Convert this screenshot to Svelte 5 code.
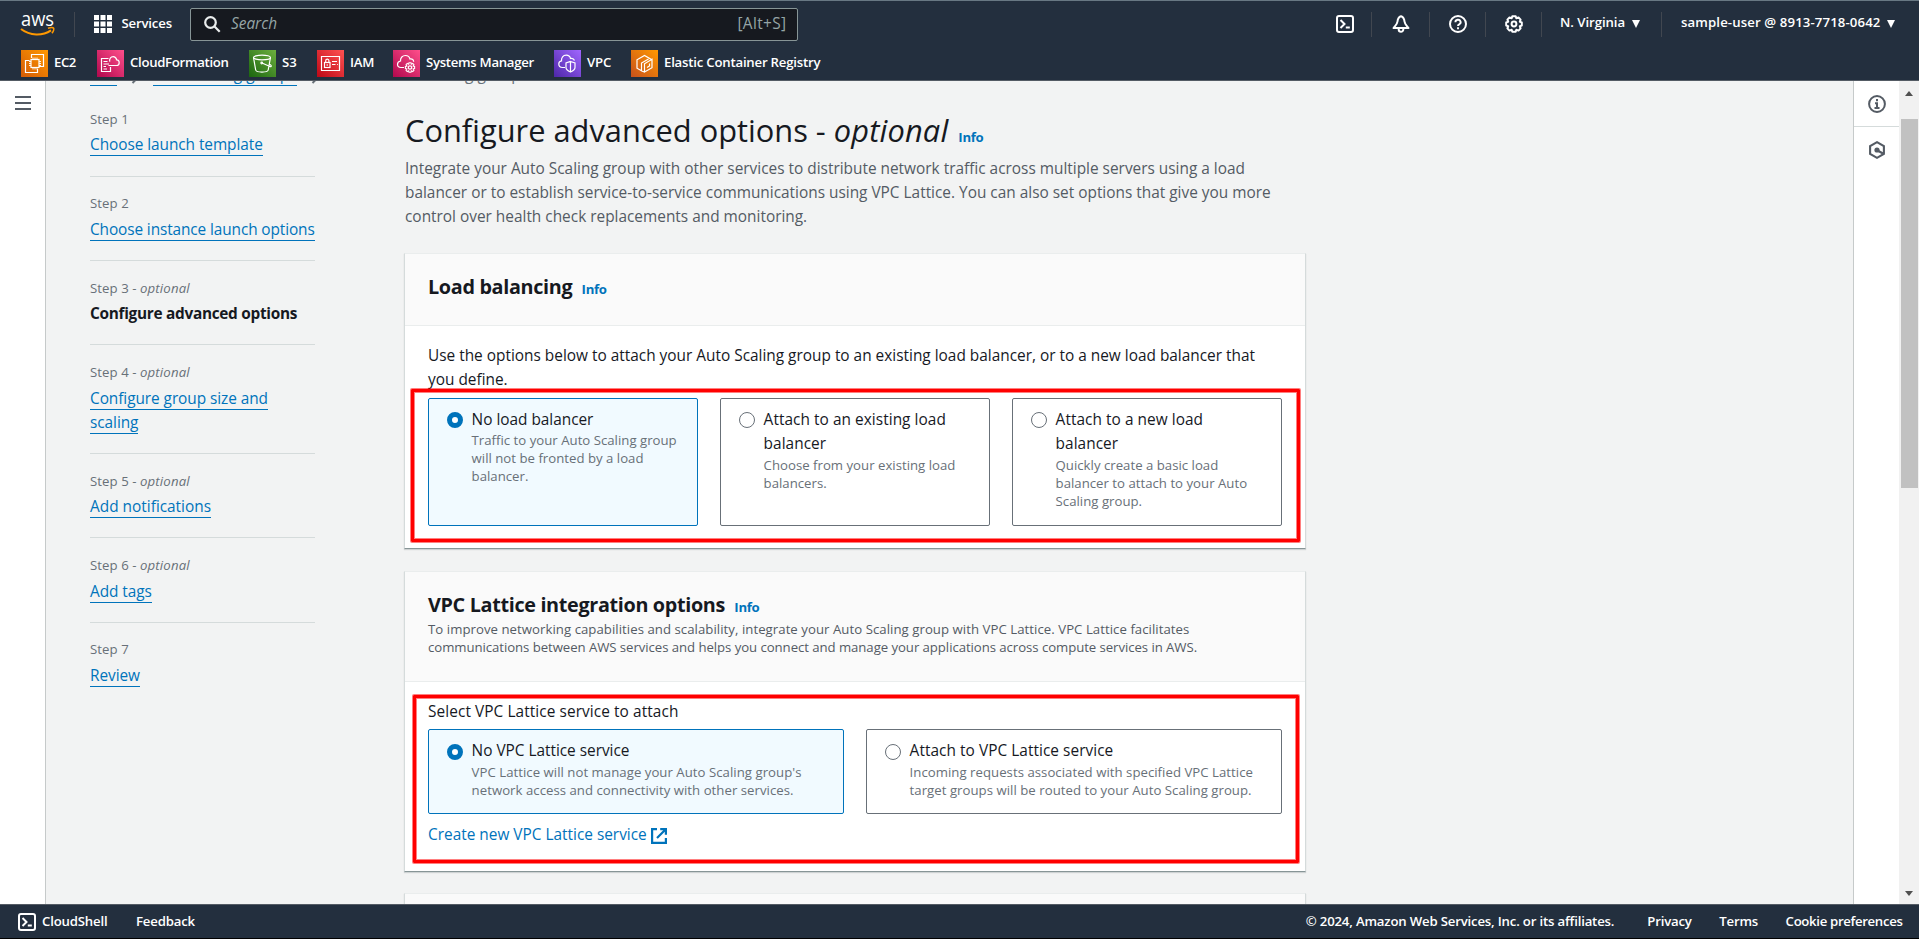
<script>
  const favorites = [
    { name: 'EC2', icon: 'ec2', from: '#d45b07', to: '#ff9900', width: 76, track: -0.45 },
    { name: 'CloudFormation', icon: 'cfn', from: '#b0084d', to: '#ff4f8b', width: 152, track: -0.31 },
    { name: 'S3', icon: 's3', from: '#1b660f', to: '#6cae3e', width: 68, track: 0 },
    { name: 'IAM', icon: 'iam', from: '#bd0816', to: '#ff5252', width: 76, track: -0.25 },
    { name: 'Systems Manager', icon: 'ssm', from: '#b0084d', to: '#ff4f8b', width: 161, track: -0.3 },
    { name: 'VPC', icon: 'vpc', from: '#4d27a8', to: '#a166ff', width: 77, track: -0.1 },
    { name: 'Elastic Container Registry', icon: 'ecr', from: '#c8511b', to: '#ff9900', width: 190, track: -0.21 }
  ];

  const steps = [
    { label: 'Step 1', title: 'Choose launch template' },
    { label: 'Step 2', title: 'Choose instance launch options' },
    { label: 'Step 3', optional: true, title: 'Configure advanced options', current: true },
    { label: 'Step 4', optional: true, title: 'Configure group size and scaling' },
    { label: 'Step 5', optional: true, title: 'Add notifications' },
    { label: 'Step 6', optional: true, title: 'Add tags' },
    { label: 'Step 7', title: 'Review' }
  ];

  const balancers = [
    { title: ['No load balancer'], text: ['Traffic to your Auto Scaling group', 'will not be fronted by a load', 'balancer.'] },
    { title: ['Attach to an existing load', 'balancer'], text: ['Choose from your existing load', 'balancers.'] },
    { title: ['Attach to a new load', 'balancer'], text: ['Quickly create a basic load', 'balancer to attach to your Auto', 'Scaling group.'] }
  ];

  const lattice = [
    { title: ['No VPC Lattice service'], text: ['VPC Lattice will not manage your Auto Scaling group\'s', 'network access and connectivity with other services.'] },
    { title: ['Attach to VPC Lattice service'], text: ['Incoming requests associated with specified VPC Lattice', 'target groups will be routed to your Auto Scaling group.'] }
  ];

  let balancer = $state(0);
  let service = $state(0);
</script>

{#snippet shell()}
  <svg class="ico18" viewBox="0 0 18 18" fill="none" stroke="#fff" stroke-width="2">
    <rect x="1" y="1" width="16" height="16" rx="2" />
    <path d="M4.500 5l4 4-4 4M9.800 12.600h4" />
  </svg>
{/snippet}

{#snippet tiles(options, selected, pick)}
  <div class="tiles" role="radiogroup">
    {#each options as option, i}
      <button class="tile" class:selected={selected === i} role="radio" aria-checked={selected === i} onclick={() => pick(i)}>
        <span class="radio"></span>
        <span class="tile-body">
          <span class="tile-title">{#each option.title as line}<span class="line">{line}</span>{/each}</span>
          <span class="tile-text">{#each option.text as line}<span class="line">{line}</span>{/each}</span>
        </span>
      </button>
    {/each}
  </div>
{/snippet}

<div class="app">
  <header>
    <div class="bar">
      <svg class="logo" width="37" height="25" viewBox="0 0 37 25">
        <text x="1" y="13.500" textLength="33" lengthAdjust="spacingAndGlyphs" class="logo-text">aws</text>
        <path d="M1 17c9 7 21.500 7 30 1.300" fill="none" stroke="#f90" stroke-width="2" />
        <path d="M28 16.300c2.500-.9 5-.8 5.600-.2s0 3.200-1.700 5.200" fill="none" stroke="#f90" stroke-width="1.500" />
      </svg>
      <i class="sep first"></i>
      <svg class="ico18 grid" viewBox="0 0 18 18" fill="#fff">
        {#each [0, 6.5, 13] as y}{#each [0, 6.5, 13] as x}<rect {x} {y} width="5" height="5" />{/each}{/each}
      </svg>
      <span class="services">Services</span>
      <div class="search">
        <svg width="17" height="17" viewBox="0 0 17 17" fill="none" stroke="#eaeded" stroke-width="2.200">
          <circle cx="6.500" cy="6.500" r="5.300" /><path d="M10.300 10.300l5.400 5.400" />
        </svg>
        <em>Search</em>
        <span class="hint">[Alt+S]</span>
      </div>
      <div class="tools">
        <div class="tool t1">{@render shell()}</div>
        <div class="tool t2">
          <svg class="ico18" viewBox="0 0 18 18" fill="none" stroke="#fff" stroke-width="2" stroke-linejoin="round">
            <path d="M9 1.200C6.600 2 5.700 4 5.500 6.500 5.300 9 3.500 10.500 1.500 13h15c-2-2.500-3.800-4-4-6.500C12.300 4 11.400 2 9 1.200z" />
            <path d="M6.700 13.500v1a2.300 2.300 0 0 0 4.600 0v-1" />
          </svg>
        </div>
        <div class="tool t3">
          <svg class="ico18" viewBox="0 0 18 18" fill="none" stroke="#fff" stroke-width="2">
            <circle cx="9" cy="9" r="8" />
            <path d="M6.400 7.200a2.600 2.400 0 1 1 3.800 2.100c-.9.500-1.200.8-1.200 1.700M9 12.200v2" stroke-width="1.900" />
          </svg>
        </div>
        <div class="tool t4">
          <svg class="ico18" viewBox="0 0 18 18" fill="none" stroke="#fff" stroke-width="2" stroke-linejoin="round">
            <path d="M7.300 1.300h3.400l.6 1.900 2.200-.8 2.100 2.200-.8 2.100 2 .7v3.200l-2 .7.800 2.100-2.100 2.200-2.200-.8-.6 1.900H7.300l-.6-1.900-2.200.8-2.100-2.200.8-2.100-2-.7V7.400l2-.7-.8-2.100 2.100-2.200 2.200.8z" />
            <circle cx="9" cy="9" r="2.400" />
          </svg>
        </div>
        <div class="tool region"><span>N. Virginia</span><i class="caret"></i></div>
        <div class="tool user"><span>sample-user @ 8913-7718-0642</span><i class="caret"></i></div>
      </div>
    </div>
    <nav class="favorites">
      {#each favorites as fav}
        <a href="#{fav.icon}" style="width: {fav.width}px; letter-spacing: {fav.track}px">
          <svg width="27" height="27" viewBox="0 0 27 27" fill="none" stroke="#fff" stroke-width="1.200">
            <defs><linearGradient id={fav.icon} x1="0" y1="1" x2="1" y2="0"><stop offset="0" stop-color={fav.from} /><stop offset="1" stop-color={fav.to} /></linearGradient></defs>
            <rect width="27" height="27" fill="url(#{fav.icon})" stroke="none" />
            {#if fav.icon === 'ec2'}
              <path d="M10.500 8V4.500h12v12H18M8.500 10.500h-4v12h12V19" />
              <rect x="10" y="9.500" width="8" height="8" />
              <path d="M12 7.500v2M14 7.500v2M16 7.500v2M12 17.500v2M14 17.500v2M16 17.500v2M8 11.500h2M8 13.500h2M8 15.500h2M18 11.500h2M18 13.500h2M18 15.500h2" stroke-width=".9" />
            {:else if fav.icon === 'cfn'}
              <path d="M13.500 17v4.500h-9V8.500h7M6.500 11.500h4M6.500 14h5.500M6.500 16.500h2.500M6.500 19h3.500" />
              <path d="M11.500 15.500h8c1.700 0 2.700-1.200 2.700-2.800s-1-2.700-2.500-2.800c-.5-2-1.500-3.300-3.500-3.300-2.500 0-4.200 2.400-3.400 5" />
            {:else if fav.icon === 's3'}
              <ellipse cx="13" cy="7.500" rx="8.500" ry="2.300" />
              <path d="M4.500 7.500L6.700 20c.5 2.700 12 2.700 12.500 0L21.500 7.500M13 13l8 3.500c1.700.6 1.700-1 0-2l-1-.5" /><circle cx="12.700" cy="13" r=".8" />
            {:else if fav.icon === 'iam'}
              <path d="M4.500 6.500h18v14h-18zM15 11.500h5M15 14.500h3.500M20 14.500h.8" />
              <rect x="7.500" y="12.500" width="5.500" height="5" /><path d="M8.700 12.500v-1.700a1.600 1.600 0 0 1 3.200 0v1.700M10.200 14.300v1.500" />
            {:else if fav.icon === 'ssm'}
              <path d="M11 17.500H8c-2 0-3.500-1.200-3.500-3.200s1.200-3 3-3.300C7.300 7.700 9.500 5.500 12.500 5.500c2.500 0 4 1.500 4.500 3.500 2.500-.5 3.500 1 3.700 2.700" />
              <circle cx="17" cy="17.500" r="1.700" />
              <path d="M16 12.700h2l.3 1.500 1.400-.8 1.200 1.300-.8 1.400 1.500.4v2l-1.500.4.800 1.400-1.200 1.300-1.400-.8-.3 1.500h-2l-.3-1.500-1.400.8-1.200-1.300.8-1.400-1.500-.4v-2l1.500-.4-.8-1.400 1.200-1.300 1.400.8z" stroke-width="1.100" />
            {:else if fav.icon === 'vpc'}
              <path d="M11 17.500H8.500c-2.200 0-3.700-1.300-3.700-3.400 0-1.900 1.200-3 2.700-3.200C7.300 7.700 9 5.200 12.200 5.200c2.300 0 3.800 1.300 4.300 3.300 2.200-.5 3.500.7 4 2" />
              <path d="M16.500 11.500l4.500 1.500v4.500c0 2-2 3.400-4.500 4.500-2.500-1.100-4.500-2.500-4.500-4.500V13zM16.500 11.500V22" />
            {:else}
              <path d="M20.500 9.500l-7-4-7.500 4.300v8.400l4.500 2.600V13l7-4M13.500 22l7.500-4.300V9.300l-7.500 4.500zM10.500 21l3 1M16 17.500l2.500-1.500v-2.500" />
            {/if}
          </svg>
          <span>{fav.name}</span>
        </a>
      {/each}
    </nav>
  </header>

  <div class="middle">
    <aside class="rail"><i></i><i></i><i></i></aside>

    <div class="page">
      <div class="crumbs">
        <a href="#ec2-home">EC2</a>
        <svg width="8" height="12" viewBox="0 0 8 12"><path d="M1.500 1l5 5-5 5" fill="none" stroke="#687078" stroke-width="2" /></svg>
        <a href="#groups">Auto Scaling groups</a>
        <svg width="8" height="12" viewBox="0 0 8 12"><path d="M1.500 1l5 5-5 5" fill="none" stroke="#687078" stroke-width="2" /></svg>
        <span>Create Auto Scaling group</span>
      </div>

      <div class="columns">
        <ol class="steps">
          {#each steps as step}
            <li>
              <div class="step-label">{step.label}{#if step.optional}{' - '}<em>optional</em>{/if}</div>
              <div class="step-title">
                {#if step.current}<b>{step.title}</b>{:else}<a href="#step">{step.title}</a>{/if}
              </div>
            </li>
          {/each}
        </ol>

        <main>
          <h1>Configure advanced options - <em>optional</em> <a class="info" href="#info">Info</a></h1>
          <p class="intro">
            <span class="line">Integrate your Auto Scaling group with other services to distribute network traffic across multiple servers using a load</span>
            <span class="line">balancer or to establish service-to-service communications using VPC Lattice. You can also set options that give you more</span>
            <span class="line">control over health check replacements and monitoring.</span>
          </p>

          <section class="card load">
            <div class="card-head"><h2>Load balancing <a class="info" href="#info">Info</a></h2></div>
            <div class="card-body">
              <p>
                <span class="line">Use the options below to attach your Auto Scaling group to an existing load balancer, or to a new load balancer that</span>
                <span class="line">you define.</span>
              </p>
              {@render tiles(balancers, balancer, (i) => (balancer = i))}
            </div>
            <div class="mark"></div>
          </section>

          <section class="card vpc">
            <div class="card-head">
              <h2>VPC Lattice integration options <a class="info" href="#info">Info</a></h2>
              <p>
                <span class="line wide">To improve networking capabilities and scalability, integrate your Auto Scaling group with VPC Lattice. VPC Lattice facilitates</span>
                <span class="line">communications between AWS services and helps you connect and manage your applications across compute services in AWS.</span>
              </p>
            </div>
            <div class="card-body">
              <p>Select VPC Lattice service to attach</p>
              {@render tiles(lattice, service, (i) => (service = i))}
              <a class="create" href="#create">Create new VPC Lattice service
                <svg width="16" height="16" viewBox="0 0 16 16" fill="none" stroke="#0073bb" stroke-width="2.200"><path d="M6 1.100H1.100v13.800h13.800V10M9.200 1.100h5.700v5.700M14.500 1.500L6 10" /></svg>
              </a>
            </div>
            <div class="mark"></div>
          </section>

          <section class="card next"></section>
        </main>
      </div>
    </div>

    <aside class="panel">
      <div class="panel-item">
        <svg class="ico18" viewBox="0 0 18 18" fill="none" stroke="#545b64" stroke-width="2"><circle cx="9" cy="9" r="7.900" /><path d="M9 4v2.200M7 8.200h2v4.300M6.500 13h5" /></svg>
      </div>
      <div class="panel-item">
        <svg class="ico18" viewBox="0 0 18 18" fill="none" stroke="#545b64" stroke-width="2.100"><path d="M9 1.200l6.900 4v7.600L9 16.800l-6.900-4V5.200z" /><circle cx="9" cy="9" r="2.600" fill="#545b64" stroke="none" /><path d="M9.500 9.500l5.500 3" /></svg>
      </div>
    </aside>
    <div class="scroll"><i class="up"></i><i class="thumb"></i><i class="down"></i></div>
  </div>

  <footer>
    {@render shell()}
    <span class="f-shell">CloudShell</span>
    <span>Feedback</span>
    <span class="f-copy">© 2024, Amazon Web Services, Inc. or its affiliates.</span>
    <span class="f-privacy">Privacy</span>
    <span class="f-terms">Terms</span>
    <span class="f-cookie">Cookie preferences</span>
  </footer>
</div>

<style>
  :global(body) { margin: 0; overflow: hidden; }
  .app {
    width: 1919px; height: 939px; display: flex; flex-direction: column; overflow: hidden;
    font-family: 'Open Sans', 'Noto Sans', sans-serif; font-size: 15.4px; line-height: 24.4px; color: #16191f;
    background: #f2f3f3;
  }
  * { box-sizing: border-box; }
  p, h1, h2, ol { margin: 0; padding: 0; font-weight: 400; }
  a { color: #0073bb; text-decoration: none; }
  .line { display: block; white-space: nowrap; }
  svg { flex: none; display: block; }
  .ico18 { width: 18px; height: 18px; flex: none; }

  header {
    flex: none; height: 81px; background: #232f3e; color: #fff; border-top: 1px solid #687883; border-bottom: 1px solid #545b64;
    font-size: 13.2px; font-weight: 600; display: flex; flex-direction: column;
  }
  .bar { height: 46px; display: flex; align-items: center; padding-left: 20px; }
  .logo { overflow: visible; }
  .logo-text { font: 500 19.500px 'Open Sans', sans-serif; fill: #fff; }
  .sep { width: 1px; height: 25px; background: #414750; margin-left: 17px; }
  .grid { margin-left: 19px; }
  .services { margin-left: 9.500px; width: 68.500px; padding-bottom: 2px; letter-spacing: -.18px; }
  .search {
    width: 608px; height: 33px; background: #16191f; border: 1px solid #879596; border-radius: 2px; color: #95a5a6;
    display: flex; align-items: center; padding: 0 10.500px 0 13px; font-size: 15.4px; font-weight: 400;
  }
  .search em { margin-left: 10px; }
  .hint { margin-left: auto; letter-spacing: .38px; padding-top: 1px; }
  .tools { display: flex; align-items: center; margin-left: auto; }
  .tool { display: flex; align-items: center; justify-content: center; height: 25px; border-left: 1px solid #414750; }
  .tool span { padding-bottom: 3px; }
  .t1 { width: 52px; border-left: 0; }
  .t2 { width: 58px; }
  .t3 { width: 56px; }
  .t4 { width: 56px; }
  .region { width: 120px; justify-content: flex-start; padding-left: 18px; letter-spacing: -.05px; }
  .user { width: 258px; justify-content: flex-start; padding-left: 19px; letter-spacing: .12px; }
  .caret { border: 4.500px solid transparent; border-top: 8px solid #fff; border-bottom: 0; margin-left: 7px; }
  .favorites { display: flex; padding-left: 21px; height: 33px; align-items: center; }
  .favorites a { display: flex; align-items: center; gap: 6px; color: #fff; white-space: nowrap; flex: none; }
  .favorites span { padding-bottom: 2px; }

  .middle { flex: 1; min-height: 0; display: flex; }
  .rail { flex: none; width: 46px; background: #fff; border-right: 1px solid #c6caca; display: flex; flex-direction: column; gap: 4px; padding: 15px 0 0 15px; }
  .rail i { width: 16px; height: 2px; background: #545b64; }
  .page { flex: 1; overflow: hidden; padding: 0 0 0 44px; }

  .crumbs { display: flex; align-items: center; height: 24px; margin-top: -18px; color: #687078; white-space: nowrap; letter-spacing: .08px; }
  .crumbs a { border-bottom: 1px solid #0073bb; line-height: 20px; }
  .crumbs svg { margin: 6px 14px 0; }

  .columns { display: flex; }
  .steps { list-style: none; width: 225px; flex: none; margin: 5.300px 90px 0 0; }
  .steps li { padding: 18.500px 0 18.100px; border-bottom: 1px solid #d5dbdb; }
  .steps li:last-child { border: 0; }
  .step-label { font-size: 13.2px; line-height: 17.600px; color: #687078; letter-spacing: .06px; }
  .step-label em { letter-spacing: .15px; }
  .step-title { padding-top: 5px; line-height: 24.200px; letter-spacing: -.06px; margin-right: -4px; }
  .steps li:nth-child(2) .step-title { letter-spacing: -.11px; }
  .steps li:nth-child(5) .step-title { letter-spacing: 0; }
  .step-title a { border-bottom: 1px solid #0073bb; }
  .step-title b { font-weight: 700; letter-spacing: -.3px; white-space: nowrap; }

  main { width: 902px; padding-top: 23px; }
  h1 { font-size: 30.800px; line-height: 40px; letter-spacing: 0; white-space: nowrap; }
  h1 em { letter-spacing: .15px; }
  .info { font-size: 13.2px; line-height: 1; font-weight: 700; letter-spacing: -.3px; margin-left: 4.500px; }
  h1 .info { margin-left: 2px; }
  .intro { color: #545b64; margin-top: 6.500px; }

  .card { position: relative; width: 902px; margin: 0 0 22px -1px; background: #fff; border: 1px solid #d5dbdb; border-top-color: #eaeded; border-bottom-color: #879596; box-shadow: 0 1px 1px rgba(0, 28, 36, .15); }
  .card-head { background: #fafafa; border-bottom: 1px solid #eaeded; padding: 0 23px; }
  .card-body { padding: 0 23px; }
  h2 { font-size: 19.800px; font-weight: 700; letter-spacing: -.33px; line-height: 28px; white-space: nowrap; }
  .load { margin-top: 23.300px; height: 296px; }
  .load .card-head { height: 72px; padding-top: 19px; }
  .load .card-body { padding-top: 18px; }
  .load .tiles { margin-top: 5px; grid-template-columns: repeat(3, 1fr); height: 128px; }
  .vpc { height: 301px; margin-bottom: 21px; }
  .vpc .card-head { height: 110px; padding-top: 19px; }
  .vpc .card-head p { font-size: 13.2px; line-height: 18px; color: #545b64; letter-spacing: -.06px; margin-top: 1.400px; }
  .vpc .card-head .wide { letter-spacing: .045px; }
  .vpc .card-body { padding-top: 18px; }
  .vpc .card-body p { letter-spacing: .08px; }
  .vpc .tiles { margin-top: 4.500px; grid-template-columns: repeat(2, 1fr); height: 85px; }
  .next { height: 60px; background: #fafafa; }

  .tiles { display: grid; column-gap: 22px; }
  .tile { display: flex; align-items: flex-start; margin: 0; padding: 9px 0 0 18px; background: #fff; border: 1px solid #687078; border-radius: 2px; font: inherit; color: inherit; text-align: left; }
  .tile.selected { background: #f1faff; border-color: #0073bb; }
  .radio { flex: none; width: 16px; height: 16px; border: 1px solid #687078; border-radius: 50%; margin: 4px 8.600px 0 0; background: #fff; }
  .selected .radio { border: 5px solid #0073bb; }
  .tile-title { display: block; line-height: 24.200px; letter-spacing: .05px; }
  .tile.selected .tile-title { letter-spacing: -.02px; }
  .tile-text { display: block; font-size: 13.2px; line-height: 18px; color: #687078; margin-top: -.6px; letter-spacing: .01px; }
  .vpc .tile-text { margin-top: 0; letter-spacing: .03px; }
  .vpc .radio { margin-top: 5px; }
  .create { display: flex; align-items: center; gap: 4px; margin-top: 9px; }
  .create svg { margin-top: 2px; }

  .mark { position: absolute; border: 3px solid #f00; border-radius: 1px; box-shadow: 0 0 0 1px rgba(255, 0, 0, .5), inset 0 0 0 1px rgba(255, 0, 0, .5); pointer-events: none; }
  .load .mark { left: 6px; top: 135px; width: 889px; height: 153px; }
  .vpc .mark { left: 8px; top: 123px; width: 886px; height: 168px; }

  .panel { flex: none; width: 46px; background: #fff; border-left: 1px solid #c6caca; }
  .panel-item { height: 46px; display: flex; align-items: center; justify-content: center; border-bottom: 1px solid #d5dbdb; }
  .panel-item:last-child { border: 0; }
  .scroll { flex: none; width: 20px; background: #f1f1f1; display: flex; flex-direction: column; align-items: center; padding: 10px 0 8px; }
  .up { border: 4.500px solid transparent; border-bottom: 5px solid #505050; border-top: 0; }
  .down { border: 4.500px solid transparent; border-top: 5px solid #505050; border-bottom: 0; margin-top: auto; }
  .thumb { width: 17px; height: 369px; background: #c1c1c1; margin-top: 23px; }

  footer {
    flex: none; height: 35px; background: #232f3e; border-top: 1px solid #545b64; border-bottom: 1px solid #000; color: #fff;
    font-size: 13.2px; font-weight: 600; letter-spacing: -.18px; display: flex; align-items: center; padding: 0 16.500px 0 18px; white-space: nowrap;
  }
  footer span { line-height: 18px; margin-top: -1px; }
  .f-shell { margin-left: 6px; width: 94px; }
  .f-copy { margin-left: auto; }
  .f-privacy { margin-left: 33px; }
  .f-terms { margin-left: 27.500px; }
  .f-cookie { margin-left: 27.500px; letter-spacing: -.33px; }
</style>
